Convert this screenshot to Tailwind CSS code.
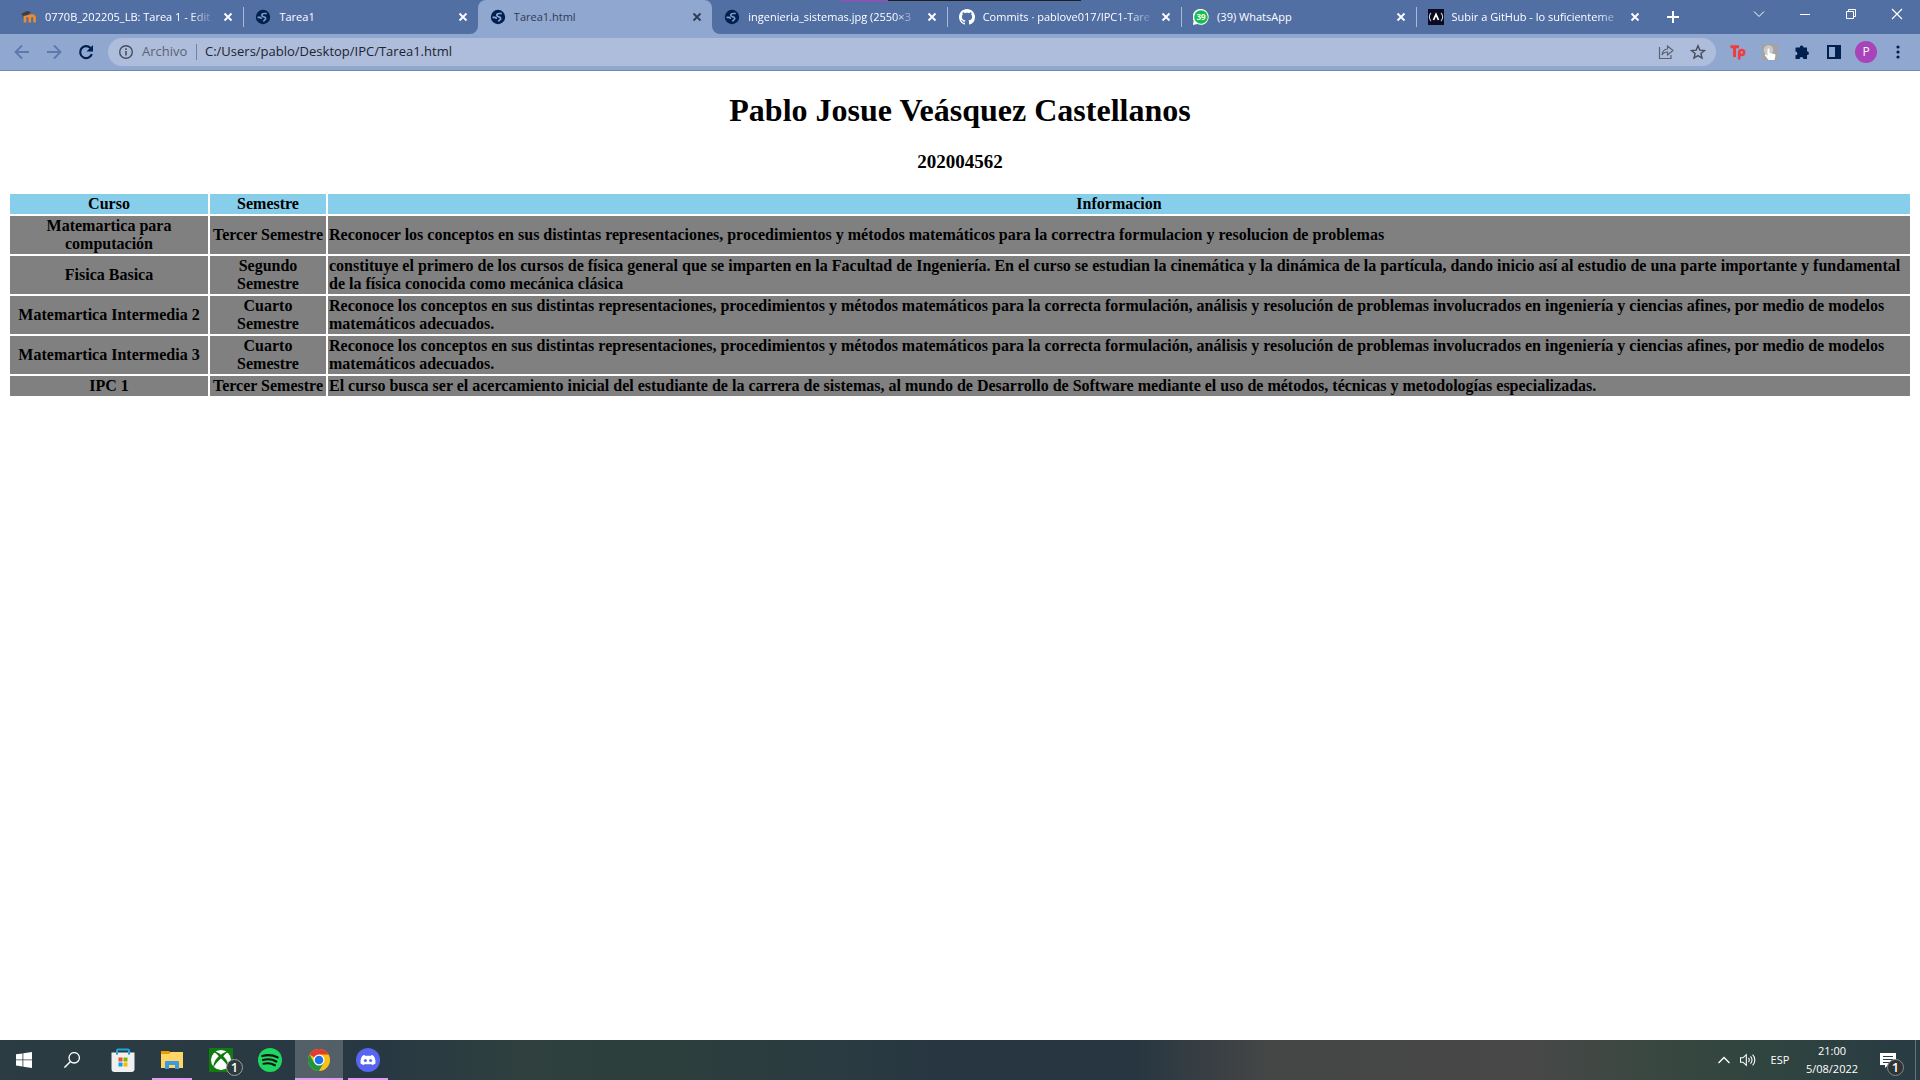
<!DOCTYPE html>
<html lang="es">
<head>
<meta charset="utf-8">
<title>Tarea1.html</title>
<script src="https://cdn.jsdelivr.net/npm/@tailwindcss/browser@4"></script>
</head>
<body class="flex h-screen flex-col overflow-hidden bg-white font-['Open_Sans','Noto_Sans',sans-serif]">

<svg class="hidden" aria-hidden="true">
  <symbol id="globe" viewBox="0 0 16 16"><circle cx="8" cy="8" r="7.200" fill="#00204f"/><path d="M11.800 4.500H9.300C7.800 4.500 6.800 5.200 6.800 6.300s1 1.400 2 1.500c1.200.1 1.900.6 1.900 1.600 0 1.500-1.700 1.300-2.200 3.100M2.500 8.300h2.300c1 0 1.500.7 1.600 1.700" fill="none" stroke="currentColor" stroke-width="1.700"/></symbol>
  <symbol id="x" viewBox="0 0 16 16"><path d="M4.500 4.500l7 7M11.500 4.500l-7 7" stroke="currentColor" stroke-width="1.800"/></symbol>
</svg>

<header>
  <div class="relative flex h-[34px] bg-[#526fa4] pl-[9px] text-[11px] text-white">
    <div class="absolute left-[840px] top-0 flex h-px w-[241px] bg-[#1f1f1f]"><span class="w-12 bg-[#b03fc0]"></span></div>
    <nav class="flex min-w-0 flex-1" aria-label="Pestañas">
      <div class="flex min-w-0 flex-1 items-center pl-3 pr-[7px]">
        <svg class="mr-2 size-4 shrink-0" viewBox="0 0 16 16"><path d="M4 13.500V9a2.400 2.400 0 0 1 4.800 0v4.500M8.800 9a2.400 2.400 0 0 1 4.800 0v4.500" fill="none" stroke="#ef8b2c" stroke-width="2.600"/><path d="M0 5l6-3 4 1-3 3-5 1z" fill="#403c42"/><path d="M1.500 5v5" stroke="#5a5560" stroke-width=".7"/></svg>
        <a href="#" class="min-w-0 flex-1 overflow-hidden whitespace-nowrap mask-r-from-85% mask-r-to-100%">0770B_202205_LB: Tarea 1 - Edit</a>
        <button class="ml-1 size-4" aria-label="Cerrar"><svg class="size-4"><use href="#x"/></svg></button>
      </div>
      <div class="relative flex min-w-0 flex-1 items-center pl-3 pr-[7px]">
        <span class="absolute left-0 top-[7px] h-5 w-px bg-[#a9b8d6]"></span>
        <svg class="mr-2 size-4 shrink-0 text-[#7e97c4]"><use href="#globe"/></svg>
        <a href="#" class="min-w-0 flex-1 overflow-hidden whitespace-nowrap">Tarea1</a>
        <button class="ml-1 size-4" aria-label="Cerrar"><svg class="size-4"><use href="#x"/></svg></button>
      </div>
      <div class="relative flex min-w-0 flex-1 items-center rounded-t-lg bg-[#90a7d0] pl-3 pr-[7px] text-[#2f3b52]">
        <svg class="absolute bottom-0 -left-2 size-2" viewBox="0 0 8 8"><path d="M8 0v8H0a8 8 0 0 0 8-8" fill="#90a7d0"/></svg>
        <svg class="absolute -right-2 bottom-0 size-2" viewBox="0 0 8 8"><path d="M0 0v8h8a8 8 0 0 1-8-8" fill="#90a7d0"/></svg>
        <svg class="mr-2 size-4 shrink-0 text-[#90a7d0]"><use href="#globe"/></svg>
        <a href="#" class="min-w-0 flex-1 overflow-hidden whitespace-nowrap">Tarea1.html</a>
        <button class="ml-1 size-4" aria-label="Cerrar"><svg class="size-4"><use href="#x"/></svg></button>
      </div>
      <div class="flex min-w-0 flex-1 items-center pl-3 pr-[7px]">
        <svg class="mr-2 size-4 shrink-0 text-[#7e97c4]"><use href="#globe"/></svg>
        <a href="#" class="min-w-0 flex-1 overflow-hidden whitespace-nowrap mask-r-from-85% mask-r-to-100%">ingenieria_sistemas.jpg (2550×3</a>
        <button class="ml-1 size-4" aria-label="Cerrar"><svg class="size-4"><use href="#x"/></svg></button>
      </div>
      <div class="relative flex min-w-0 flex-1 items-center pl-3 pr-[7px]">
        <span class="absolute left-0 top-[7px] h-5 w-px bg-[#a9b8d6]"></span>
        <svg class="mr-2 size-4 shrink-0" viewBox="0 0 16 16" fill="white"><path d="M8 0C3.580 0 0 3.580 0 8c0 3.540 2.290 6.530 5.470 7.590.4.070.55-.17.55-.38 0-.19-.01-.82-.01-1.490-2.010.37-2.530-.49-2.690-.94-.09-.23-.48-.94-.82-1.130-.28-.15-.68-.52-.01-.53.63-.01 1.080.58 1.230.82.720 1.210 1.870.87 2.330.66.070-.52.280-.87.510-1.070-1.780-.2-3.640-.89-3.640-3.950 0-.87.310-1.590.82-2.150-.08-.2-.36-1.020.080-2.120 0 0 .67-.21 2.200.82.640-.18 1.320-.27 2-.27s1.360.09 2 .27c1.530-1.040 2.200-.82 2.200-.82.440 1.100.160 1.920.080 2.120.510.560.82 1.270.82 2.150 0 3.070-1.870 3.750-3.650 3.950.290.250.540.730.540 1.480 0 1.070-.01 1.930-.01 2.200 0 .210.150.460.550.380A8.010 8.010 0 0 0 16 8c0-4.420-3.580-8-8-8"/></svg>
        <a href="#" class="min-w-0 flex-1 overflow-hidden whitespace-nowrap mask-r-from-85% mask-r-to-100%">Commits · pablove017/IPC1-Tare</a>
        <button class="ml-1 size-4" aria-label="Cerrar"><svg class="size-4"><use href="#x"/></svg></button>
      </div>
      <div class="relative flex min-w-0 flex-1 items-center pl-3 pr-[7px]">
        <span class="absolute left-0 top-[7px] h-5 w-px bg-[#a9b8d6]"></span>
        <svg class="mr-2 size-4 shrink-0" viewBox="0 0 16 16"><path d="M0 16l.6-4.300A8 8 0 1 1 4.200 15.100z" fill="white"/><circle cx="8" cy="8" r="6.800" fill="#12c04c"/><text x="8" y="10.900" text-anchor="middle" font-size="8" font-weight="700" fill="white">39</text></svg>
        <a href="#" class="min-w-0 flex-1 overflow-hidden whitespace-nowrap">(39) WhatsApp</a>
        <button class="ml-1 size-4" aria-label="Cerrar"><svg class="size-4"><use href="#x"/></svg></button>
      </div>
      <div class="relative flex min-w-0 flex-1 items-center pl-3 pr-[7px]">
        <span class="absolute left-0 top-[7px] h-5 w-px bg-[#a9b8d6]"></span>
        <svg class="mr-2 size-4 shrink-0" viewBox="0 0 16 16"><path d="M0 0h16v16H0z" fill="#0a0a23"/><path d="M3 4C.8 6 .8 10 3 12M13 4c2.200 2 2.200 6 0 8" fill="none" stroke="#c8c8d0" stroke-width="1.100"/><path d="M5.500 11L8 5.500l2.500 5.500" fill="none" stroke="white" stroke-width="1.800"/></svg>
        <a href="#" class="min-w-0 flex-1 overflow-hidden whitespace-nowrap mask-r-from-85% mask-r-to-100%">Subir a GitHub - lo suficienteme</a>
        <button class="ml-1 size-4" aria-label="Cerrar"><svg class="size-4"><use href="#x"/></svg></button>
      </div>
    </nav>
    <div class="flex w-[270px] items-start justify-between">
      <button class="grid h-[34px] w-[46px] place-items-center" aria-label="Nueva pestaña"><svg class="size-4" viewBox="0 0 16 16"><path d="M8 2v12M2 8h12" stroke="white" stroke-width="2"/></svg></button>
      <div class="flex h-7">
        <button class="grid w-[46px] place-items-center" aria-label="Buscar pestañas"><svg class="size-3" viewBox="0 0 12 12"><path d="M1 3.500l5 5 5-5" fill="none" stroke="white"/></svg></button>
        <button class="grid w-[46px] place-items-center" aria-label="Minimizar"><svg class="size-3" viewBox="0 0 12 12"><path d="M1 6.500h10" stroke="white"/></svg></button>
        <button class="grid w-[46px] place-items-center" aria-label="Restaurar"><svg class="size-3" viewBox="0 0 12 12"><path d="M1.500 3.500h7v7h-7zM3.500 3.500v-2h7v7h-2" fill="none" stroke="white"/></svg></button>
        <button class="grid w-[46px] place-items-center" aria-label="Cerrar ventana"><svg class="size-3" viewBox="0 0 12 12"><path d="M1 1l10 10M11 1L1 11" stroke="white" stroke-width="1.200"/></svg></button>
      </div>
    </div>
  </div>

  <div class="flex h-[37px] items-center border-b border-[#6f88b8] bg-[#90a7d0] pl-1.5 pr-1.5 text-[#00204f]">
    <button class="grid w-8 place-items-center text-[#5d79ac]" aria-label="Atrás"><svg class="size-4" viewBox="0 0 16 16"><path d="M15 8H2M8 1.500L1.500 8 8 14.500" fill="none" stroke="currentColor" stroke-width="1.800"/></svg></button>
    <button class="grid w-8 place-items-center text-[#5d79ac]" aria-label="Adelante"><svg class="size-4" viewBox="0 0 16 16"><path d="M1 8h13M8 1.500L14.500 8 8 14.500" fill="none" stroke="currentColor" stroke-width="1.800"/></svg></button>
    <button class="grid w-8 place-items-center" aria-label="Recargar"><svg class="size-4" viewBox="0 0 16 16"><path d="M13.800 10.200A6 6 0 1 1 12.500 4" fill="none" stroke="currentColor" stroke-width="2.200"/><path d="M15 1v6.500H8.500z" fill="currentColor"/></svg></button>
    <div class="ml-1.5 flex h-7 flex-1 items-center rounded-full bg-[#aebddc] pl-2.5 pr-0.5 text-[13px]">
      <svg class="size-4 text-[#474d5a]" viewBox="0 0 16 16"><circle cx="8" cy="8" r="6.300" fill="none" stroke="currentColor" stroke-width="1.400"/><path d="M8 7v4.500M8 4.300v1.700" stroke="currentColor" stroke-width="1.600"/></svg>
      <label for="url" class="ml-2 w-[46px] text-[#5b6373]">Archivo</label>
      <span class="mx-2 h-4 w-px bg-[#7681a0]"></span>
      <input id="url" class="min-w-0 flex-1 bg-transparent text-[#20242d] outline-none" value="C:/Users/pablo/Desktop/IPC/Tarea1.html">
      <button class="grid w-8 place-items-center text-[#5b6373]" aria-label="Compartir"><svg class="size-4" viewBox="0 0 16 16"><path d="M1.500 3v11.500h11.500V11M9.500 5V2l5.500 4.500L9.500 11V8C6.500 8 5 9 4 11c.2-3.500 2-5.700 5.500-6z" fill="none" stroke="currentColor" stroke-width="1.200"/></svg></button>
      <button class="grid w-8 place-items-center text-[#474d5a]" aria-label="Marcador"><svg class="size-4" viewBox="0 0 16 16"><path d="M8 1.800l1.800 4.300 4.700.4-3.600 3 1.100 4.600L8 11.600l-4 2.500 1.100-4.600-3.600-3 4.700-.4z" fill="none" stroke="currentColor" stroke-width="1.400"/></svg></button>
    </div>
    <div class="ml-1.5 flex">
      <button class="grid w-8 place-items-center" aria-label="Tp"><svg class="size-4" viewBox="0 0 16 16"><path d="M.5 2.800H9M4.500 3v10" stroke="#f23b3b" stroke-width="3" fill="none"/><circle cx="11.700" cy="8.500" r="2.500" fill="none" stroke="#f23b3b" stroke-width="2.400"/><path d="M9.200 8v7.500" stroke="#f23b3b" stroke-width="2.500"/></svg></button>
      <button class="grid w-8 place-items-center" aria-label="Extensión de clic"><svg class="size-4" viewBox="0 0 16 16"><path d="M0 0h16v16H0z" fill="#a3a3a3"/><circle cx="6.500" cy="6" r="4.800" fill="#c8c8c8"/><path d="M5.500 5.500c0-1.300 2-1.300 2 0v3.500l5 1c1 .3 1 1 .8 2l-.8 4H6.500L3 11.500c-.5-1 .5-1.600 1.300-1l1.200 1z" fill="white"/></svg></button>
      <button class="grid w-8 place-items-center" aria-label="Extensiones"><svg class="size-4" viewBox="0 0 16 16" fill="currentColor"><path d="M2 3.500h3.700a1.900 1.900 0 1 1 3.800 0H13V7.300a1.900 1.900 0 1 1 0 3.800V15H9.400a1.900 1.900 0 0 0-3.800 0H1.500v-3.700a1.900 1.900 0 0 0 0-3.800V4z"/></svg></button>
      <button class="grid w-8 place-items-center" aria-label="Panel lateral"><svg class="size-4" viewBox="0 0 16 16"><path d="M2 2h12v12H2z" fill="none" stroke="currentColor" stroke-width="2"/><path d="M9 2h5v12H9z" fill="currentColor"/></svg></button>
      <button class="grid w-8 place-items-center" aria-label="Perfil"><span class="grid size-[22px] place-items-center rounded-full bg-[#a843b9] text-xs text-white">P</span></button>
      <button class="grid w-8 place-items-center" aria-label="Menú"><svg class="size-4" viewBox="0 0 16 16" fill="currentColor"><circle cx="8" cy="3" r="1.600"/><circle cx="8" cy="8" r="1.600"/><circle cx="8" cy="13" r="1.600"/></svg></button>
    </div>
  </div>
</header>

<main class="min-h-0 flex-1 overflow-auto px-2 font-['Liberation_Serif','Times_New_Roman',serif] font-bold text-black">
  <h1 class="mt-[21px] text-center text-[32px] leading-[37px]">Pablo Josue Veásquez Castellanos</h1>
  <h3 class="mt-[22px] text-center text-[19px] leading-[22px]">202004562</h3>
  <table class="mt-[19px] w-full table-fixed border-separate border-spacing-[2px] text-base leading-[18px]">
    <colgroup><col class="w-[198px]"><col class="w-[116px]"><col></colgroup>
    <thead>
      <tr class="bg-[#87ceeb]"><th class="p-px">Curso</th><th class="p-px">Semestre</th><th class="p-px">Informacion</th></tr>
    </thead>
    <tbody class="bg-[#808080]">
      <tr><td class="p-px text-center">Matemartica para computación</td><td class="p-px text-center">Tercer Semestre</td><td class="p-px">Reconocer los conceptos en sus distintas representaciones, procedimientos y métodos matemáticos para la correctra formulacion y resolucion de problemas</td></tr>
      <tr><td class="p-px text-center">Fisica Basica</td><td class="p-px text-center">Segundo Semestre</td><td class="p-px">constituye el primero de los cursos de física general que se imparten en la Facultad de Ingeniería. En el curso se estudian la cinemática y la dinámica de la partícula, dando inicio así al estudio de una parte importante y fundamental de la física conocida como mecánica clásica</td></tr>
      <tr><td class="p-px text-center">Matemartica Intermedia 2</td><td class="p-px text-center">Cuarto Semestre</td><td class="p-px">Reconoce los conceptos en sus distintas representaciones, procedimientos y métodos matemáticos para la correcta formulación, análisis y resolución de problemas involucrados en ingeniería y ciencias afines, por medio de modelos matemáticos adecuados.</td></tr>
      <tr><td class="p-px text-center">Matemartica Intermedia 3</td><td class="p-px text-center">Cuarto Semestre</td><td class="p-px">Reconoce los conceptos en sus distintas representaciones, procedimientos y métodos matemáticos para la correcta formulación, análisis y resolución de problemas involucrados en ingeniería y ciencias afines, por medio de modelos matemáticos adecuados.</td></tr>
      <tr><td class="p-px text-center">IPC 1</td><td class="p-px text-center">Tercer Semestre</td><td class="p-px">El curso busca ser el acercamiento inicial del estudiante de la carrera de sistemas, al mundo de Desarrollo de Software mediante el uso de métodos, técnicas y metodologías especializadas.</td></tr>
    </tbody>
  </table>
</main>

<footer class="flex h-10 bg-[linear-gradient(90deg,#2b3c42_0%,#283843_20%,#2f403f_27%,#2c3f3c_35%,#2b3c41_42%,#273641_49%,#273641_59%,#454646_66%,#484848_80%,#394840_86%,#30443f_92%,#293b44_100%)] text-xs text-white">
  <button class="grid w-12 place-items-center" aria-label="Inicio"><svg class="size-4" viewBox="0 0 16 16" fill="white"><path d="M0 2.300l6.500-.9v6.100H0zM7.300 1.300L16 0v7.500H7.300zM0 8.300h6.500v6.200L0 13.600zM7.300 8.300H16V16l-8.700-1.300z"/></svg></button>
  <button class="grid w-12 place-items-center" aria-label="Buscar"><svg class="size-4" viewBox="0 0 16 16"><circle cx="10.200" cy="5.800" r="5.200" fill="none" stroke="white" stroke-width="1.300"/><path d="M6.500 9.500L.4 15.600" stroke="white" stroke-width="1.400"/></svg></button>
  <div class="ml-[3px] flex gap-px">
    <button class="grid w-12 place-items-center" aria-label="Microsoft Store"><svg class="size-6" viewBox="0 0 24 24"><path d="M6 6V2.500A1 1 0 0 1 7 1.500h10a1 1 0 0 1 1 1V6" fill="none" stroke="#1ba7e0" stroke-width="2"/><path d="M.5 4.500h23V21a3 3 0 0 1-3 3h-17a3 3 0 0 1-3-3z" fill="#f0f0f0"/><path d="M5 4.500h2v2H5zm12 0h2v2h-2z" fill="#0f8ccb"/><path d="M7.500 9.500h4v4h-4z" fill="#f25022"/><path d="M12.500 9.500h4v4h-4z" fill="#7fba00"/><path d="M7.500 14.500h4v4h-4z" fill="#00a4ef"/><path d="M12.500 14.500h4v4h-4z" fill="#ffb900"/></svg></button>
    <button class="relative grid w-12 place-items-center" aria-label="Explorador de archivos"><svg class="size-6" viewBox="0 0 24 24"><path d="M1 3h8l2 2h11v15H1z" fill="#e5a000"/><path d="M1 6h8l1.500-2H23v16H1z" fill="#ffd567"/><path d="M5 21v-7a1 1 0 0 1 1-1h12a1 1 0 0 1 1 1v7h-4v-4H9v4z" fill="#3c9be0"/></svg><span class="absolute inset-x-1 bottom-0 h-0.5 bg-[#e59cf0]"></span></button>
    <button class="relative grid w-12 place-items-center" aria-label="Xbox"><svg class="size-6" viewBox="0 0 24 24"><path d="M0 0h24v24H0z" fill="#107c10"/><circle cx="12" cy="12" r="10" fill="white"/><path d="M4 4c3-1 5.500.5 8 2.800C14.500 4.500 17 3 20 4c-2.200.5-4 2-5.700 4.200C17.500 11.500 20 15 19.500 20 18 16 15 13 12 10.500 9 13 6 16 4.500 20 4 15 6.500 11.500 9.700 8.200 8 6 6.200 4.500 4 4z" fill="#107c10"/></svg><span class="absolute bottom-1 right-0.5 grid size-[17px] place-items-center rounded-full border border-[#a0a0a0] bg-[#2e3b3c] text-[13px] font-semibold leading-none">1</span></button>
    <button class="grid w-12 place-items-center" aria-label="Spotify"><svg class="size-6" viewBox="0 0 24 24"><circle cx="12" cy="12" r="12" fill="#1ed760"/><path d="M4.200 8c5-1.500 11-1 15.500 1.400M5 12c4.500-1.300 9.500-.7 13.300 1.500M5.600 15.700c4-.9 7.800-.5 11.300 1.500" fill="none" stroke="#121212" stroke-width="2.200" stroke-linecap="round"/></svg></button>
    <button class="relative grid w-12 place-items-center bg-white/20" aria-label="Chrome"><svg class="size-[22px]" viewBox="0 0 24 24"><circle cx="12" cy="12" r="12" fill="#fbc116"/><path d="M12 12L1.600 6A12 12 0 0 1 22.400 6H12z" fill="#e33b2e"/><path d="M1.600 6A12 12 0 0 0 12 24l5.200-9L12 12 6.800 15z" fill="#229342"/><circle cx="12" cy="12" r="6" fill="white"/><circle cx="12" cy="12" r="4.700" fill="#1a73e8"/></svg><span class="absolute inset-x-0 bottom-0 h-0.5 bg-[#e59cf0]"></span></button>
    <button class="relative grid w-12 place-items-center" aria-label="Discord"><svg class="size-6" viewBox="0 0 24 24"><circle cx="12" cy="12" r="12" fill="#5865f2"/><path d="M8.800 7c-1 .2-1.800.5-2.600.9C4.800 10.200 4.300 12.700 4.600 15.500c1 .8 2.200 1.300 3.400 1.600l.8-1.200c2 .6 4.300.6 6.400 0l.8 1.200c1.200-.3 2.400-.8 3.400-1.600.3-2.800-.2-5.300-1.600-7.600-.8-.4-1.700-.7-2.600-.9l-.5.9c-1.800-.3-3.600-.3-5.400 0z" fill="white"/><circle cx="9.400" cy="12.600" r="1.500" fill="#5865f2"/><circle cx="14.600" cy="12.600" r="1.500" fill="#5865f2"/></svg><span class="absolute inset-x-1 bottom-0 h-0.5 bg-[#e59cf0]"></span></button>
  </div>
  <div class="ml-auto flex items-center">
    <button class="grid w-6 place-items-center" aria-label="Iconos ocultos"><svg class="size-3" viewBox="0 0 12 12"><path d="M.5 9L6 3.500 11.500 9" fill="none" stroke="white" stroke-width="1.400"/></svg></button>
    <button class="grid w-6 place-items-center" aria-label="Volumen"><svg class="size-4" viewBox="0 0 16 16"><path d="M.5 5.800H3L6.300 2.700v10.600L3 10.200H.500zM8.500 6c1 1 1 3 0 4M10.500 4.300c2 2 2 5.400 0 7.400M12.600 2.600c3 3 3 7.800 0 10.800" fill="none" stroke="white" stroke-width="1.100"/></svg></button>
    <button class="w-10 text-center text-[11px]">ESP</button>
    <time class="w-16 text-center text-[11px] leading-[18px]">21:00<br>5/08/2022</time>
    <button class="relative grid h-10 w-12 place-items-center" aria-label="Notificaciones"><svg class="size-4" viewBox="0 0 16 16"><path d="M0 1h16v12H8l-3 3v-3H0z" fill="white"/><path d="M3 4.500h10M3 7.500h10M3 10.500h6" stroke="#2b3c40"/></svg><span class="absolute bottom-1 right-2 grid size-[17px] place-items-center rounded-full border border-[#8a8a8a] bg-[#303436] text-[13px] font-semibold leading-none">1</span></button>
    <span class="ml-[3px] h-10 w-[5px] border-l border-[#66747a]"></span>
  </div>
</footer>
</body>
</html>
